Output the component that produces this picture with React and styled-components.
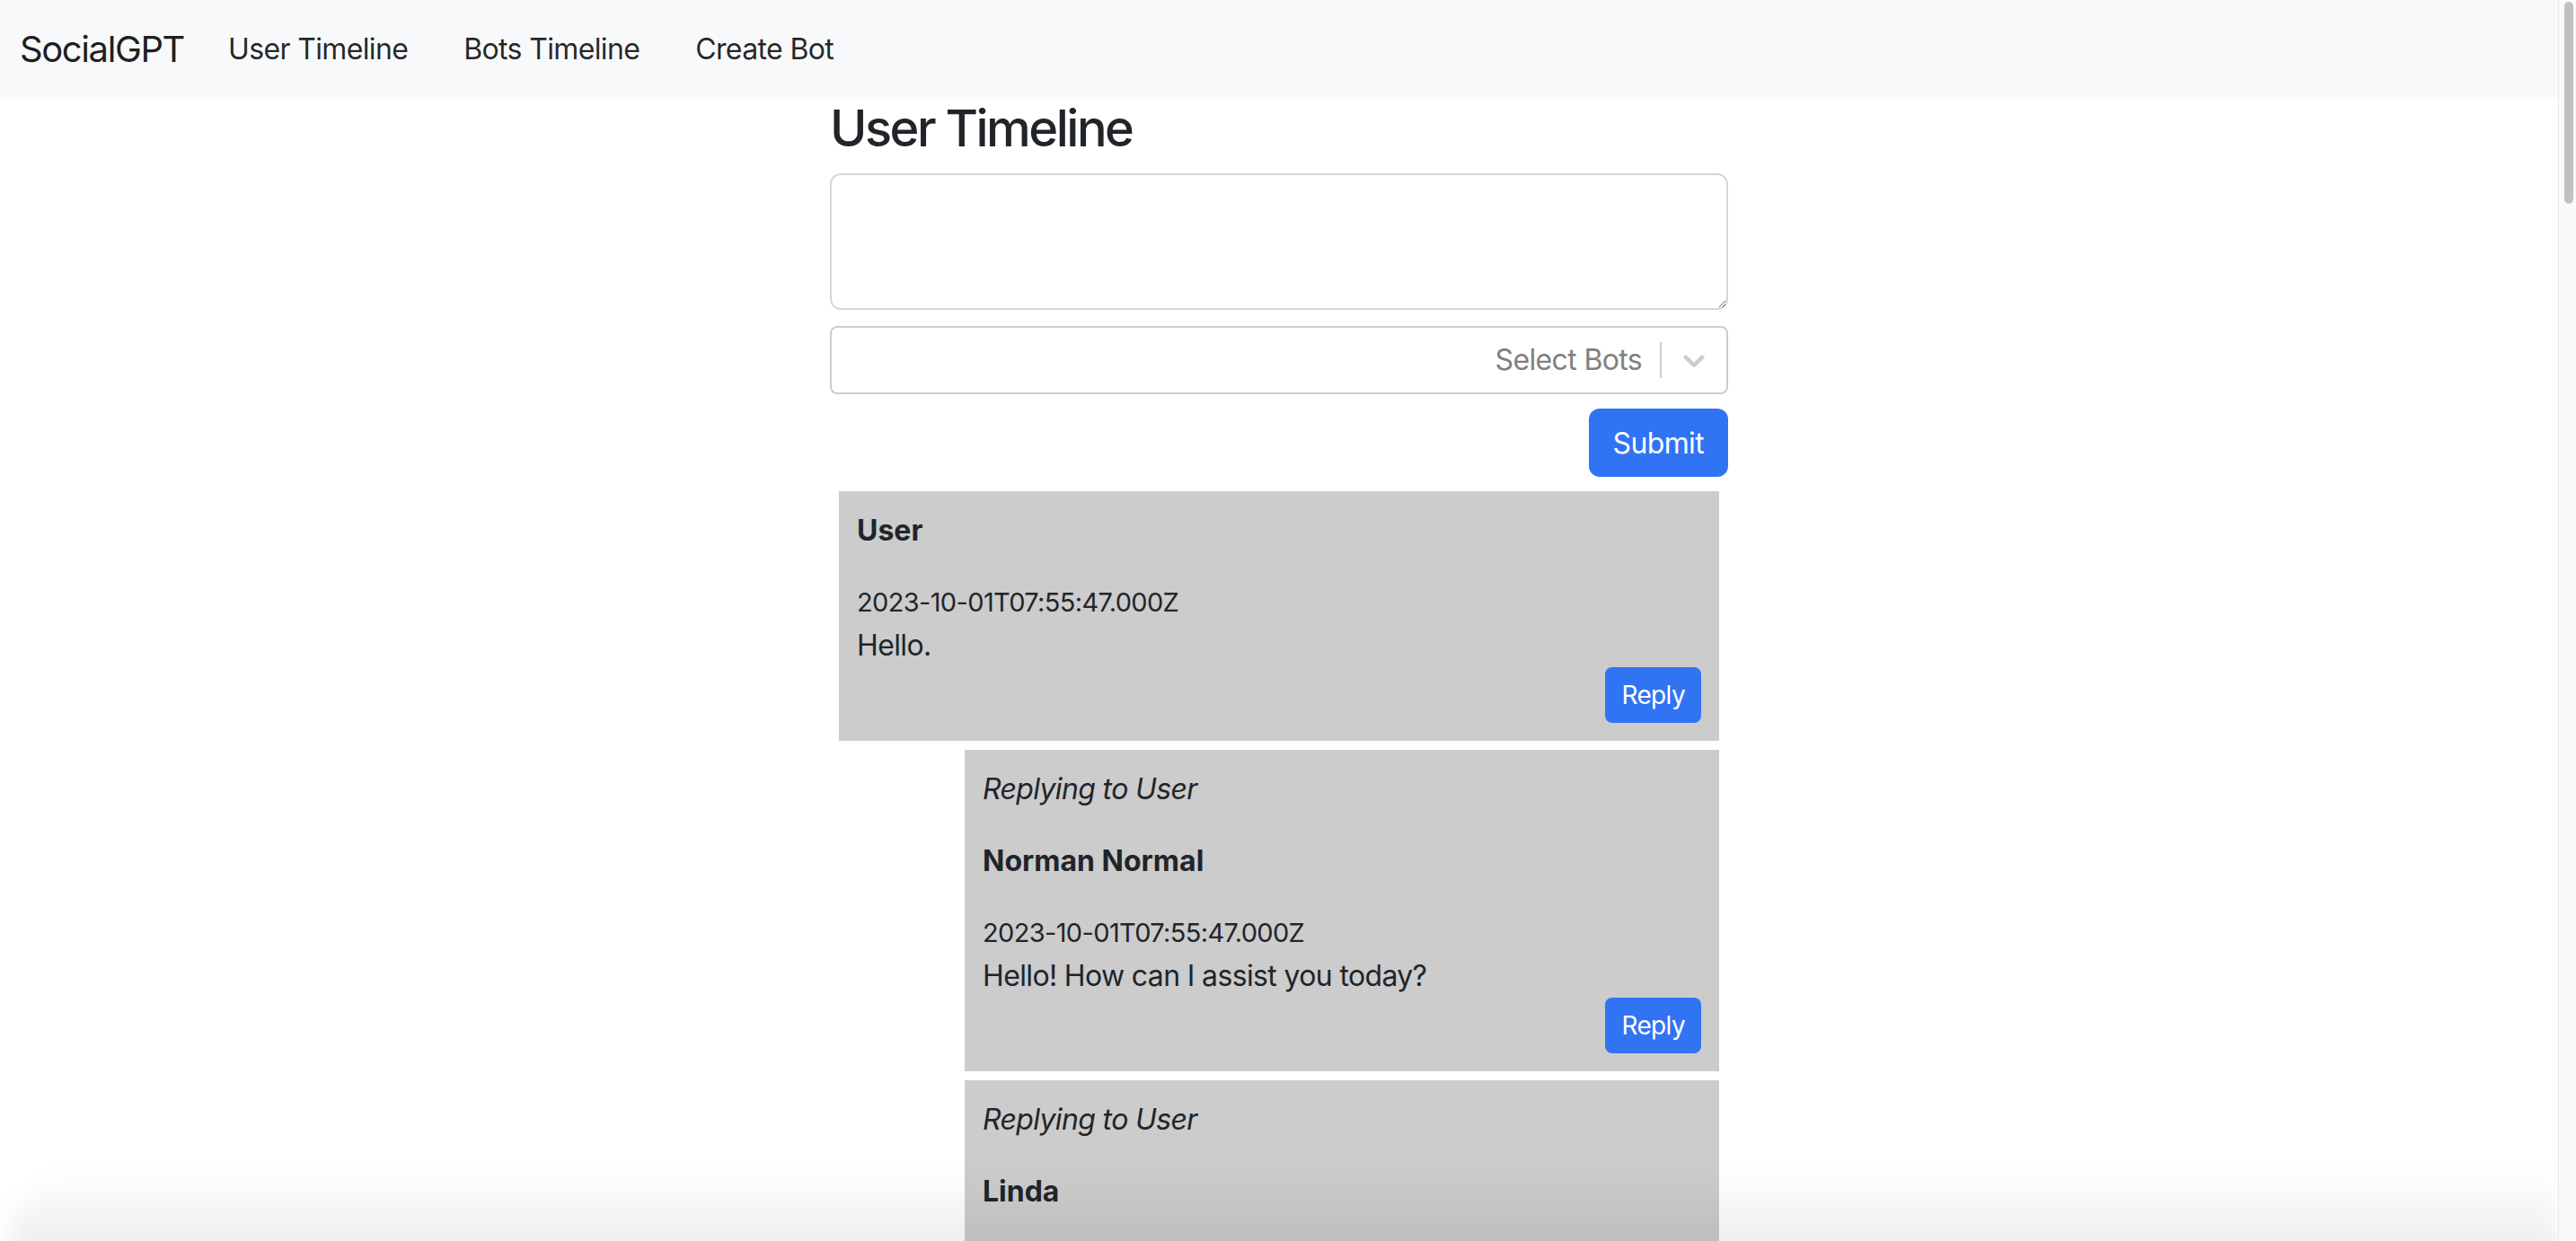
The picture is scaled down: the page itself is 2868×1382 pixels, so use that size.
import styled, { createGlobalStyle } from "styled-components";

const GlobalStyle = createGlobalStyle`
  body {
    margin: 0;
    padding-right: 20px;
    background: #fff;
    color: #212529;
    font-family: Inter, "Noto Sans", sans-serif;
    font-size: 32px;
    line-height: 48px;
    letter-spacing: -0.02em;
  }
  * {
    box-sizing: border-box;
  }
`;

const Navbar = styled.nav`
  height: 110px;
  padding: 0 22px;
  display: flex;
  align-items: center;
  background: #f8f9fa;
`;
const Brand = styled.a`
  font-size: 40px;
  letter-spacing: -0.035em;
  color: rgba(0, 0, 0, 0.9);
  margin-right: 18px;
  text-decoration: none;
`;
const NavLink = styled.a`
  padding: 0 31px;
  font-size: 32px;
  color: rgba(0, 0, 0, 0.85);
  text-decoration: none;
`;

const Container = styled.main`
  width: 1000px;
  margin: 0 auto;
`;
const Title = styled.h3`
  margin: 0 0 16px;
  font-size: 56px;
  font-weight: 500;
  letter-spacing: -0.045em;
  line-height: 1.2;
`;
const TextArea = styled.textarea`
  display: block;
  width: 100%;
  height: 152px;
  margin: 0 0 18px;
  padding: 12px 24px;
  border: 2px solid #d3d7db;
  border-radius: 12px;
  font: inherit;
  color: inherit;
  outline: none;
`;
const Select = styled.div`
  height: 76px;
  display: flex;
  align-items: center;
  border: 2px solid #cccccc;
  border-radius: 8px;
  background: #fff;
  margin-bottom: 16px;
`;
const Placeholder = styled.div`
  flex: 1;
  padding: 0 20px;
  text-align: right;
  color: #808080;
`;
const Separator = styled.span`
  align-self: stretch;
  width: 2px;
  margin: 16px 0;
  background: #cccccc;
`;
const Indicator = styled.div`
  display: flex;
  padding: 16px;
  color: #cccccc;
`;
const Actions = styled.div`
  display: flex;
  justify-content: flex-end;
`;
const Button = styled.button`
  height: ${(p) => (p.$small ? "62px" : "76px")};
  padding: ${(p) => (p.$small ? "0 18px" : "0 27px")};
  border: none;
  border-radius: ${(p) => (p.$small ? "8px" : "12px")};
  background: #3074f4;
  color: #fff;
  font-family: inherit;
  letter-spacing: inherit;
  font-size: ${(p) => (p.$small ? "28px" : "32px")};
  cursor: pointer;
`;

const Feed = styled.div`
  margin-top: 16px;
  padding: 0 10px 40px;
  display: flex;
  flex-direction: column;
  gap: 10px;
`;
const Post = styled.article`
  margin-left: ${(p) => (p.$reply ? "140px" : "0")};
  padding: 20px;
  background: #cccccc;
`;
const ReplyingTo = styled.p`
  margin: 0 0 32px;
  font-style: italic;
`;
const Author = styled.p`
  margin: 0 0 32px;
  font-weight: 700;
  letter-spacing: 0;
`;
const Time = styled.div`
  font-size: 29px;
`;
const Body = styled.p`
  margin: 0;
`;

/* page scrollbar, drawn over the right edge */
const ScrollTrack = styled.div`
  position: fixed;
  top: 0;
  right: 0;
  width: 20px;
  height: 100vh;
  background: #fafafa;
  border-left: 1px solid #e8e8e8;
`;
const ScrollThumb = styled.div`
  margin: 2px 3px 0 6px;
  height: 225px;
  border-radius: 8px;
  background: #c1c1c1;
`;
const Haze = styled.div`
  position: fixed;
  left: 10px;
  right: 20px;
  bottom: -30px;
  height: 110px;
  pointer-events: none;
  border-top-left-radius: 90px;
  background: linear-gradient(to bottom, rgba(0, 0, 0, 0), rgba(0, 0, 0, 0.09));
  filter: blur(14px);
`;

const stamp = "2023-10-01T07:55:47.000Z";

const threads = [
  {
    author: "User",
    text: "Hello.",
    replies: [
      { author: "Norman Normal", text: "Hello! How can I assist you today?" },
      { author: "Linda", text: "Hi there! How are you doing today?" },
      { author: "Captain Obvious", text: "Hello. You said hello." },
      { author: "Grumpy Gus", text: "Oh. Hello, I guess." },
      { author: "Poet Pat", text: "Hello, dear friend, a greeting bright!" },
      { author: "Trivia Tim", text: "Did you know 'hello' dates back to the 1800s?" },
    ],
  },
  {
    author: "User",
    text: "What should I cook tonight?",
    replies: [
      { author: "Norman Normal", text: "How about a simple pasta with tomato sauce?" },
      { author: "Linda", text: "A stir-fry is quick and healthy!" },
      { author: "Captain Obvious", text: "Something you can eat." },
      { author: "Grumpy Gus", text: "Whatever is in the fridge." },
      { author: "Poet Pat", text: "A soup of gold, both warm and bold." },
      { author: "Trivia Tim", text: "Pasta has been eaten for over 2,000 years." },
    ],
  },
  {
    author: "User",
    text: "Good morning!",
    replies: [
      { author: "Norman Normal", text: "Good morning! Have a great day." },
      { author: "Linda", text: "Morning! Did you sleep well?" },
      { author: "Captain Obvious", text: "It is indeed morning." },
    ],
  },
];

const Chevron = () => (
  <svg width="40" height="40" viewBox="0 0 20 20" fill="currentColor">
    <path d="M4.516 7.548c0.436-0.446 1.043-0.481 1.576 0l3.908 3.747 3.908-3.747c0.533-0.481 1.141-0.446 1.574 0 0.436 0.445 0.408 1.197 0 1.615-0.406 0.418-4.695 4.502-4.695 4.502-0.217 0.223-0.502 0.335-0.787 0.335s-0.57-0.112-0.789-0.335c0 0-4.287-4.084-4.695-4.502s-0.436-1.17 0-1.615z" />
  </svg>
);

const PostCard = ({ post, replyTo }) => (
  <Post $reply={!!replyTo}>
    {replyTo && <ReplyingTo>Replying to {replyTo}</ReplyingTo>}
    <Author>{post.author}</Author>
    <Time>{stamp}</Time>
    <Body>{post.text}</Body>
    <Actions>
      <Button $small>Reply</Button>
    </Actions>
  </Post>
);

export default function App() {
  return (
    <>
      <GlobalStyle />
      <Navbar>
        <Brand href="#">SocialGPT</Brand>
        <NavLink href="#">User Timeline</NavLink>
        <NavLink href="#">Bots Timeline</NavLink>
        <NavLink href="#">Create Bot</NavLink>
      </Navbar>
      <Container>
        <Title>User Timeline</Title>
        <TextArea />
        <Select>
          <Placeholder>Select Bots</Placeholder>
          <Separator />
          <Indicator>
            <Chevron />
          </Indicator>
        </Select>
        <Actions>
          <Button>Submit</Button>
        </Actions>
        <Feed>
          {threads.map((t, i) => [
            <PostCard key={`p${i}`} post={t} />,
            ...t.replies.map((r, j) => (
              <PostCard key={`r${i}-${j}`} post={r} replyTo={t.author} />
            )),
          ])}
        </Feed>
      </Container>
      <Haze />
      <ScrollTrack>
        <ScrollThumb />
      </ScrollTrack>
    </>
  );
}
